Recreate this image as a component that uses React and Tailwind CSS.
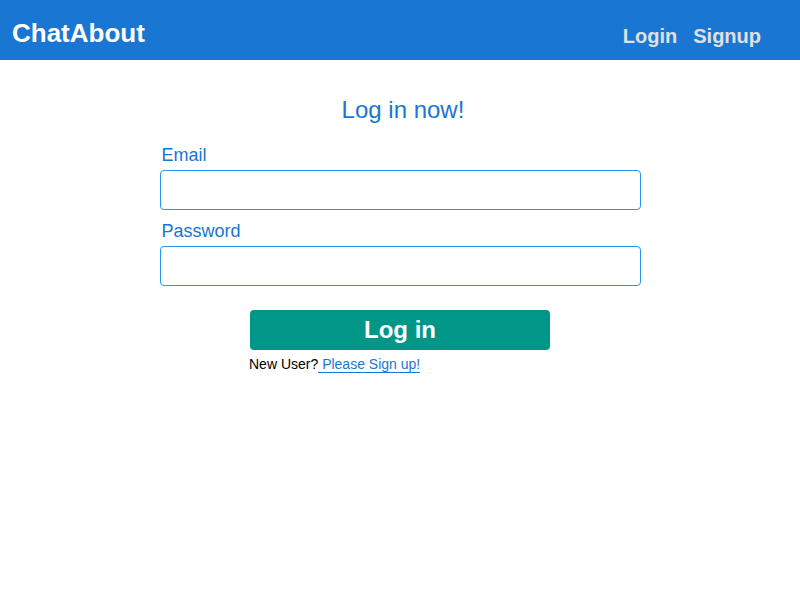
import React from 'react';

const App = () => {
  return (
    <div className="min-h-screen bg-white font-['Liberation_Sans',Arial,sans-serif]">
      {/* Top bar */}
      <header className="h-[60px] bg-[#1976d2] flex justify-between pl-3 pr-[39px]">
        <h1 className="pt-[18px] text-[26px] leading-[30px] font-bold text-white">ChatAbout</h1>
        <nav className="flex gap-4 pt-[24px] text-[20px] leading-[24px] font-bold text-[#e0e0e0]">
          <a href="#">Login</a>
          <a href="#">Signup</a>
        </nav>
      </header>

      {/* Login form */}
      <main className="w-[481px] mx-auto">
        <h2 className="mt-[36px] pl-[6px] text-center text-[24px] leading-[28px] text-[#1976d2]">Log in now!</h2>

        <form className="mt-5 flex flex-col" onSubmit={(e) => e.preventDefault()}>
          <label className="pl-[2px] text-[18px] leading-[22px] text-[#1976d2]">Email</label>
          <input
            type="email"
            className="mt-1 h-10 w-full rounded border border-[#2196f3] px-2 outline-none"
          />

          <label className="mt-[10px] pl-[2px] text-[18px] leading-[22px] text-[#1976d2]">Password</label>
          <input
            type="password"
            className="mt-1 h-10 w-full rounded border border-[#2196f3] px-2 outline-none"
          />

          <div className="w-[300px] mx-auto mt-6">
            <button
              type="submit"
              className="w-full h-10 rounded bg-[#009688] text-white text-[24px] font-bold leading-[28px]"
            >
              Log in
            </button>
            <p className="mt-[6px] -ml-px text-[14px] leading-4 text-black">
              New User?
              <a href="#" className="text-[#1976d2] border-b border-[#1976d2]">&nbsp;Please Sign up!</a>
            </p>
          </div>
        </form>
      </main>
    </div>
  );
};

export default App;
